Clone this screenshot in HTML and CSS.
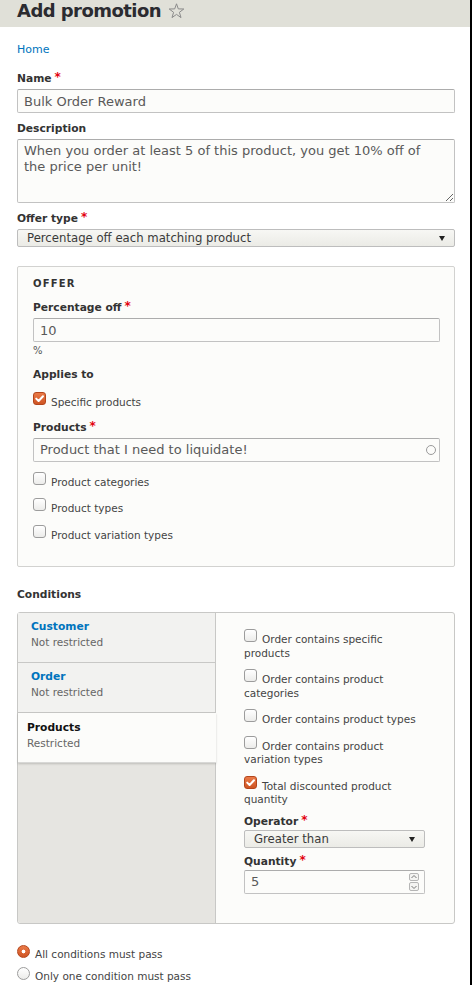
FILE: index.html
```html
<!DOCTYPE html>
<html lang="en">
<head>
<meta charset="utf-8">
<title>Add promotion</title>
<link rel="stylesheet" href="styles.css">
</head>
<body>
<div class="page">
  <header class="page-header">
    <h1 class="page-title">Add promotion
      <svg class="star" width="17" height="16" viewBox="0 0 17 16"><path d="M8.5 0.8 L10.3 5.9 L15.8 6 L11.4 9.3 L13 14.6 L8.5 11.4 L4 14.6 L5.6 9.3 L1.2 6 L6.7 5.9 Z" fill="none" stroke="#8a8a8a" stroke-width="1" stroke-linejoin="round"/></svg>
    </h1>
  </header>
  <main class="content">
    <nav class="breadcrumb"><a href="#">Home</a></nav>

    <div class="form-item first">
      <label class="label">Name<span class="req">*</span></label>
      <input class="text-input" type="text" value="Bulk Order Reward">
    </div>

    <div class="form-item">
      <label class="label">Description</label>
      <textarea class="text-area">When you order at least 5 of this product, you get 10% off of the price per unit!</textarea>
    </div>

    <div class="form-item">
      <label class="label">Offer type<span class="req">*</span></label>
      <div class="select">Percentage off each matching product<span class="arrow"></span></div>
    </div>

    <div class="fieldset">
      <div class="legend">Offer</div>
      <div class="fs-item">
        <label class="label">Percentage off<span class="req">*</span></label>
        <input class="text-input" type="text" value="10">
        <div class="desc">%</div>
      </div>
      <div class="fs-item">
        <div class="label nomb">Applies to</div>
      </div>
      <div class="cb-item gap10"><span class="cb checked"><svg width="13" height="13" viewBox="0 0 13 13"><path d="M3.2 6.6 L5.6 9 L10 4.2" fill="none" stroke="#fff" stroke-width="2" stroke-linecap="round" stroke-linejoin="round"/></svg></span>Specific products</div>
      <div class="fs-item">
        <label class="label">Products<span class="req">*</span></label>
        <div class="ac-wrap">
          <input class="text-input" type="text" value="Product that I need to liquidate!">
          <span class="ac-icon"></span>
        </div>
      </div>
      <div class="cb-item gap10"><span class="cb"></span>Product categories</div>
      <div class="cb-item"><span class="cb"></span>Product types</div>
      <div class="cb-item"><span class="cb"></span>Product variation types</div>
    </div>

    <div class="label conditions-label">Conditions</div>
    <div class="vtabs">
      <div class="vtabs-menu">
        <div class="tab">
          <div class="tab-title">Customer</div>
          <div class="tab-sum">Not restricted</div>
        </div>
        <div class="tab">
          <div class="tab-title">Order</div>
          <div class="tab-sum">Not restricted</div>
        </div>
        <div class="tab selected">
          <div class="tab-title">Products</div>
          <div class="tab-sum">Restricted</div>
        </div>
      </div>
      <div class="vtabs-pane">
        <div class="cb-item first"><span class="cb"></span>Order contains specific products</div>
        <div class="cb-item"><span class="cb"></span>Order contains product categories</div>
        <div class="cb-item"><span class="cb"></span>Order contains product types</div>
        <div class="cb-item"><span class="cb"></span>Order contains product variation types</div>
        <div class="cb-item"><span class="cb checked"><svg width="13" height="13" viewBox="0 0 13 13"><path d="M3.2 6.6 L5.6 9 L10 4.2" fill="none" stroke="#fff" stroke-width="2" stroke-linecap="round" stroke-linejoin="round"/></svg></span>Total discounted product quantity</div>
        <div class="pane-item op">
          <label class="label small-mb">Operator<span class="req">*</span></label>
          <div class="select">Greater than<span class="arrow"></span></div>
        </div>
        <div class="pane-item qty">
          <label class="label small-mb">Quantity<span class="req">*</span></label>
          <div class="num-wrap">
            <input class="text-input" type="text" value="5">
            <span class="spinner">
              <span class="spin"><svg width="8" height="8" viewBox="0 0 8 8"><path d="M1.5 5 L4 2.5 L6.5 5" fill="none" stroke="#777" stroke-width="1"/></svg></span>
              <span class="spin"><svg width="8" height="8" viewBox="0 0 8 8"><path d="M1.5 3 L4 5.5 L6.5 3" fill="none" stroke="#777" stroke-width="1"/></svg></span>
            </span>
          </div>
        </div>
      </div>
    </div>

    <div class="radios">
      <div class="radio-item"><span class="radio checked"></span>All conditions must pass</div>
      <div class="radio-item"><span class="radio"></span>Only one condition must pass</div>
    </div>
  </main>
</div>
</body>
</html>
```
FILE: styles.css
```css
* { box-sizing: border-box; }

html, body {
  margin: 0;
  padding: 0;
  background: #fff;
}

body {
  font-family: "DejaVu Sans", sans-serif;
  color: #333;
}

.page {
  min-height: 100vh;
  border-right: 2px solid #000;
  overflow: hidden;
}

.page-header {
  background: #e0e0d8;
  height: 27px;
  padding-left: 17px;
}

.page-title {
  margin: 0;
  font-size: 18px;
  line-height: 22px;
  font-weight: bold;
  letter-spacing: -0.55px;
  color: #2b2b30;
  display: flex;
  align-items: center;
}

.star {
  margin-left: 7px;
  margin-top: -1px;
}

.content {
  padding: 0 15px 0 17px;
}

.breadcrumb {
  margin-top: 16px;
  font-size: 11px;
  line-height: 14px;
}

.breadcrumb a {
  color: #0074bd;
  text-decoration: none;
}

.form-item {
  margin-top: 9px;
}

.form-item.first {
  margin-top: 15px;
}

.label {
  display: block;
  font-weight: bold;
  font-size: 10.7px;
  line-height: 14px;
  margin-bottom: 3px;
  color: #333;
}

.label.nomb {
  margin-bottom: 0;
}

.req {
  color: #e3000f;
  font-size: 12px;
  line-height: 0;
  margin-left: 3px;
  position: relative;
  top: -1px;
}

.text-input {
  display: block;
  width: 100%;
  height: 24px;
  margin: 0;
  border: 1px solid #c2c2c2;
  border-top-color: #acacac;
  border-radius: 2px;
  background: #fcfcfa;
  font-family: "DejaVu Sans", sans-serif;
  font-size: 13px;
  line-height: 22px;
  color: #595959;
  padding: 0 6px;
  outline: none;
}

.text-area {
  display: block;
  width: 100%;
  height: 64px;
  margin: 0;
  border: 1px solid #c2c2c2;
  border-top-color: #acacac;
  border-radius: 2px;
  background: #fcfcfa;
  font-family: "DejaVu Sans", sans-serif;
  font-size: 13px;
  line-height: 16px;
  color: #595959;
  padding: 3px 16px 3px 6px;
  resize: vertical;
  outline: none;
}

.select {
  position: relative;
  height: 18px;
  border: 1px solid #bdbdbd;
  border-radius: 2px;
  background: linear-gradient(#f7f7f4, #ebebe6);
  font-size: 11.7px;
  line-height: 16px;
  padding-left: 9px;
  color: #3a3a3a;
  white-space: nowrap;
}

.select .arrow {
  position: absolute;
  right: 9px;
  top: 6px;
  width: 0;
  height: 0;
  border-left: 3.5px solid transparent;
  border-right: 3.5px solid transparent;
  border-top: 5px solid #222;
}

.fieldset {
  margin-top: 19px;
  border: 1px solid #d2d2d0;
  border-radius: 2px;
  background: #fcfcfa;
  padding: 10px 14px 24px 15px;
}

.legend {
  font-size: 10px;
  line-height: 13px;
  font-weight: bold;
  letter-spacing: 1.2px;
  text-transform: uppercase;
  color: #333;
}

.fs-item {
  margin-top: 11px;
}

.desc {
  margin-top: 2px;
  font-size: 10px;
  line-height: 13px;
  color: #555;
}

.cb-item {
  margin-top: 9px;
  font-size: 10.5px;
  line-height: 13.5px;
  color: #444;
}

.cb-item.gap10 {
  margin-top: 10px;
}

.cb-item.first {
  margin-top: 0;
}

.cb {
  display: inline-block;
  width: 13px;
  height: 13px;
  margin-right: 5px;
  vertical-align: 1px;
  border: 1px solid #9c9c9c;
  border-radius: 3px;
  background: linear-gradient(#ffffff, #ececea);
}

.cb svg {
  display: block;
  margin: -1px 0 0 -1px;
}

.cb.checked {
  border-color: #b4461c;
  background: linear-gradient(#ea7a47, #cf5524);
}

.ac-wrap,
.num-wrap {
  position: relative;
}

.ac-icon {
  position: absolute;
  right: 4px;
  top: 7px;
  width: 10px;
  height: 10px;
  border: 1px solid #9a9a9a;
  border-radius: 50%;
}

.conditions-label {
  margin-top: 21px;
  margin-bottom: 10px;
}

.vtabs {
  display: flex;
  border: 1px solid #c8c8c6;
  border-radius: 3px;
  background: #fcfcfa;
}

.vtabs-menu {
  flex: none;
  width: 198px;
  background: #e6e5e1;
  border-right: 1px solid #c8c8c6;
  border-radius: 3px 0 0 3px;
}

.tab {
  height: 50px;
  padding: 7px 0 0 13px;
  background: #f2f2f0;
  border-bottom: 1px solid #c8c8c6;
}

.tab-title {
  font-weight: bold;
  font-size: 10.7px;
  line-height: 14px;
  color: #0074bd;
}

.tab-sum {
  margin-top: 1px;
  font-size: 10.5px;
  line-height: 14px;
  color: #666;
}

.tab.selected {
  position: relative;
  margin-right: -1px;
  padding-left: 9px;
  padding-top: 7.5px;
  background: #fcfcfa;
  border-bottom: 1px solid #d8d8d6;
  box-shadow: 0 1px 2px rgba(0, 0, 0, 0.18);
}

.tab.selected .tab-title {
  color: #111;
}

.vtabs-pane {
  flex: 1;
  padding: 16px 29px 29px 28px;
}

.pane-item.op {
  margin-top: 8px;
}

.pane-item.qty {
  margin-top: 7px;
}

.label.small-mb {
  margin-bottom: 1px;
}

.spinner {
  position: absolute;
  right: 6px;
  top: 3px;
  display: flex;
  flex-direction: column;
  gap: 1px;
}

.spin {
  display: block;
  width: 10px;
  height: 8.5px;
  border: 1px solid #b5b5b5;
  border-radius: 2px;
  background: #f4f4f2;
}

.spin svg {
  display: block;
  margin: -0.5px 0 0 0;
}

.radios {
  margin-top: 21px;
}

.radio-item {
  margin-top: 6px;
  font-size: 10.5px;
  line-height: 13.5px;
  color: #444;
}

.radio-item:first-child {
  margin-top: 0;
}

.radio {
  display: inline-block;
  width: 13px;
  height: 13px;
  margin-right: 5px;
  vertical-align: 0;
  border: 1px solid #9c9c9c;
  border-radius: 50%;
  background: linear-gradient(#ffffff, #ececea);
}

.radio.checked {
  border-color: #b4461c;
  background: radial-gradient(circle, #fff 0, #fff 1.6px, transparent 2.2px), linear-gradient(#ea7a47, #cf5524);
}
```
